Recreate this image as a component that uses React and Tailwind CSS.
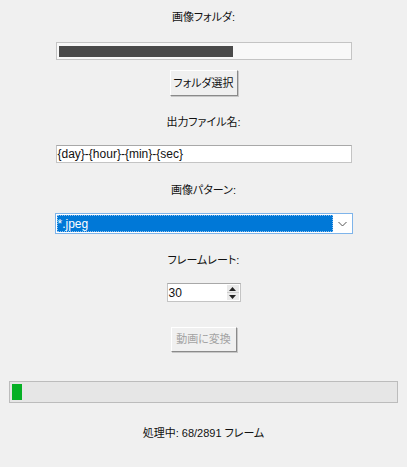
import React from 'react';

const font = "font-['Liberation_Sans','Noto_Sans_CJK_JP',sans-serif] [font-feature-settings:'palt']";

const Label = ({ children, className = '' }) => (
  <div className={`h-4 text-[11px] leading-4 text-[#111] ${className}`}>{children}</div>
);

const Button = ({ children, disabled, className = '' }) => (
  <div
    className={`flex items-center justify-center border border-t-white border-l-white border-b-[#8a8a8a] border-r-[#8a8a8a] bg-[#f0f0f0] shadow-[1px_1px_0_#c8c8c8] text-[11px] ${
      disabled ? 'text-[#a3a3a3]' : 'text-[#111]'
    } ${className}`}
  >
    {children}
  </div>
);

export default function App() {
  return (
    <div className={`flex h-[467px] w-[407px] flex-col items-center bg-[#f0f0f0] ${font}`}>
      <Label className="mt-[9px]">画像フォルダ:</Label>

      <div className="mt-[17px] flex h-[18px] w-[296px] items-center border border-[#c4c4c4] bg-[#f8f8f8] px-[2px]">
        <div className="h-[11px] w-[174px] bg-[#4a4a4a]" />
      </div>

      <Button className="mt-[10px] h-[26px] w-[68px]">フォルダ選択</Button>

      <Label className="mt-[18px]">出力ファイル名:</Label>

      <div className="mt-[15px] flex h-[18px] w-[296px] items-center border border-[#c4c4c4] border-t-[#a8a8a8] bg-white pl-[1px] text-[12px] text-[#111]">
        {'{day}-{hour}-{min}-{sec}'}
      </div>

      <Label className="mt-[19px]">画像パターン:</Label>

      <div className="mt-[15px] flex h-[21px] w-[298px] border border-[#7eb4ea] bg-white">
        <div className="m-[1px] flex flex-1 items-center bg-[#0078d7] pl-[1px] text-[12px] text-white outline-1 outline-dotted outline-offset-[-1px] outline-[#8fbfee]">
          *.jpeg
        </div>
        <div className="flex w-[18px] items-center justify-center">
          <svg width="9" height="6" viewBox="0 0 9 6">
            <path d="M0.5 1 L4.5 5 L8.5 1" fill="none" stroke="#555" strokeWidth="1" />
          </svg>
        </div>
      </div>

      <Label className="mt-[18px]">フレームレート:</Label>

      <div className="mt-[15px] flex h-[19px] w-[74px] border border-[#c4c4c4] border-t-[#a8a8a8] bg-white">
        <div className="flex flex-1 items-center pl-[1px] text-[12px] text-[#111]">30</div>
        <div className="my-[1px] mr-[1px] flex w-[12px] flex-col">
          <div className="flex flex-1 items-center justify-center border-b border-[#cfcfcf] bg-[#eaeaea]">
            <svg width="7" height="4" viewBox="0 0 7 4">
              <path d="M0 4 L3.5 0 L7 4 Z" fill="#222" />
            </svg>
          </div>
          <div className="flex flex-1 items-center justify-center bg-[#eaeaea]">
            <svg width="7" height="4" viewBox="0 0 7 4">
              <path d="M0 0 L3.5 4 L7 0 Z" fill="#222" />
            </svg>
          </div>
        </div>
      </div>

      <Button disabled className="mt-[25px] h-[25px] w-[66px]">動画に変換</Button>

      <div className="mt-[29px] flex h-[22px] w-[389px] items-center border border-[#bcbcbc] bg-[#e6e6e6] px-[2px]">
        <div className="h-[16px] w-[10px] bg-[#06b025]" />
      </div>

      <Label className="mt-[22px]">処理中: 68/2891 フレーム</Label>
    </div>
  );
}
